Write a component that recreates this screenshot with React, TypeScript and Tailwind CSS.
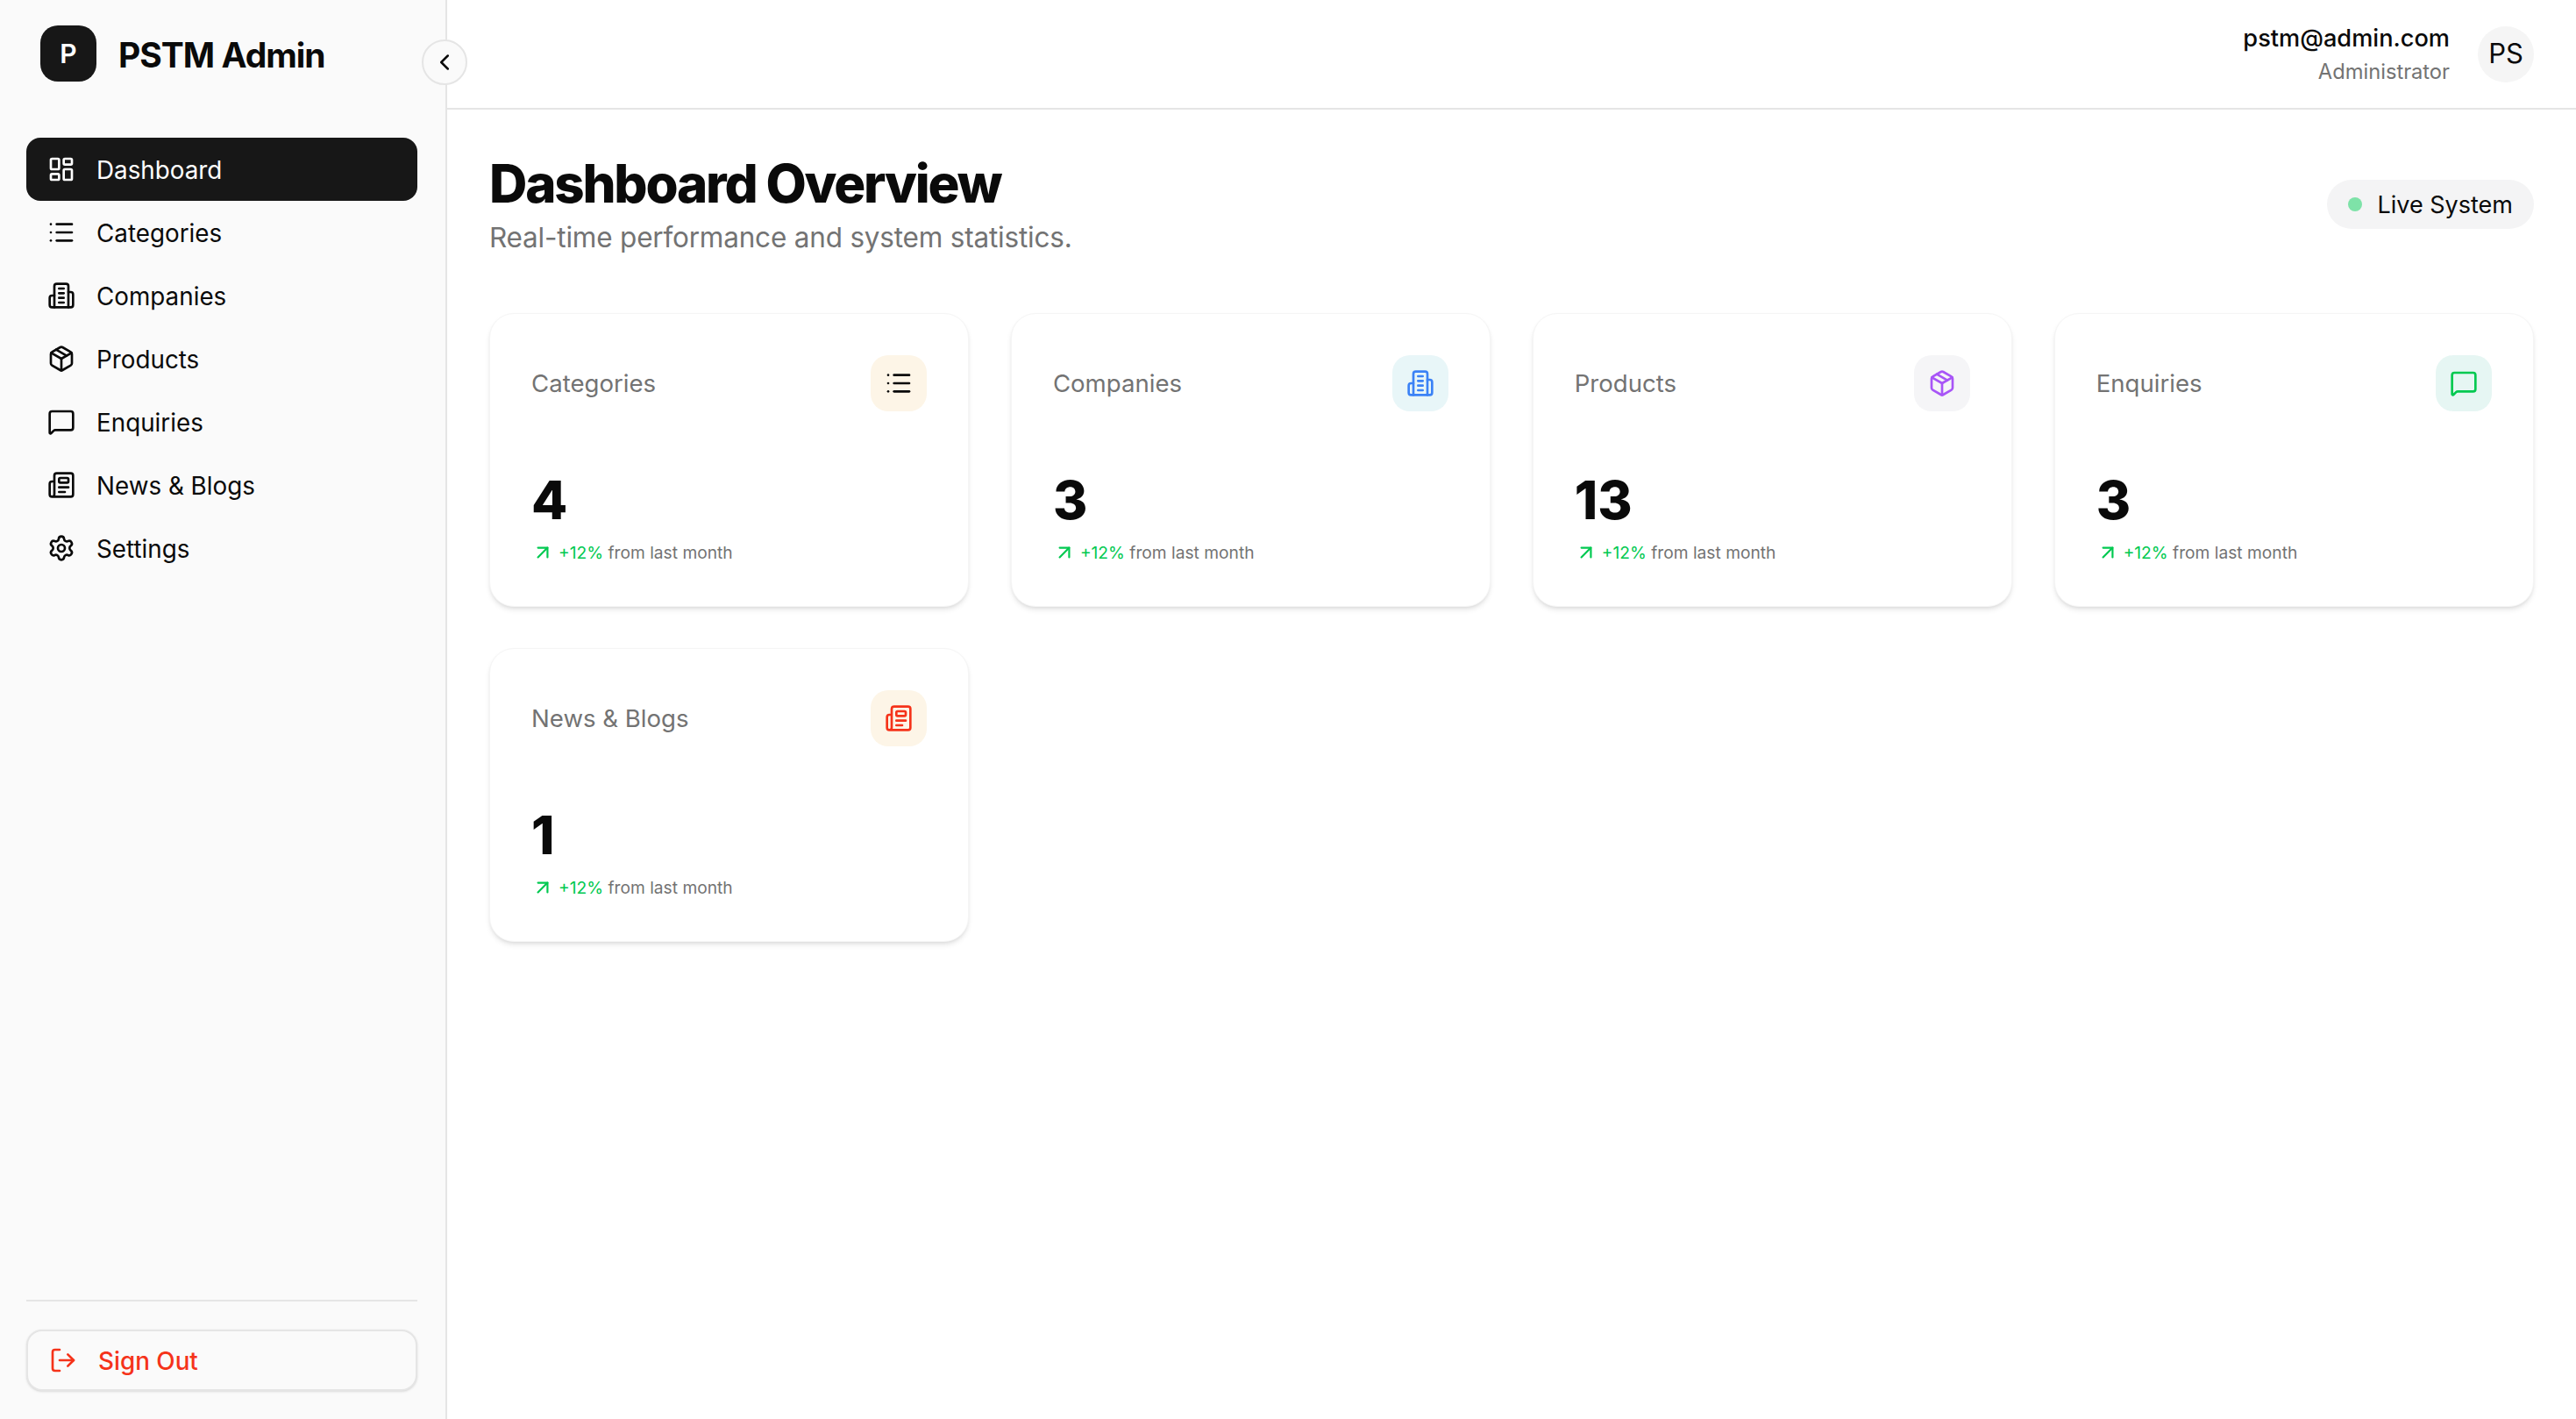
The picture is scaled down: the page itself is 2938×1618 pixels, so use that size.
import React from "react";
import { LayoutDashboard, List, Package, MessageSquare, Newspaper, Settings, LogOut, ChevronLeft, ArrowUpRight } from "lucide-react";

function Building({ size = 32, className = "" }: { size?: number; className?: string }) {
  return (
    <svg width={size} height={size} viewBox="0 0 24 24" fill="none" stroke="currentColor" strokeWidth="2" strokeLinecap="round" strokeLinejoin="round" className={className}>
      <path d="M6 22V4a2 2 0 0 1 2-2h8a2 2 0 0 1 2 2v18Z" />
      <path d="M6 12H4a2 2 0 0 0-2 2v6a2 2 0 0 0 2 2h2" />
      <path d="M18 9h2a2 2 0 0 1 2 2v9a2 2 0 0 1-2 2h-2" />
      <path d="M10 6h4" />
      <path d="M10 10h4" />
      <path d="M10 14h4" />
      <path d="M10 18h4" />
    </svg>
  );
}

const nav = [
  { label: "Dashboard", Icon: LayoutDashboard },
  { label: "Categories", Icon: List },
  { label: "Companies", Icon: Building },
  { label: "Products", Icon: Package },
  { label: "Enquiries", Icon: MessageSquare },
  { label: "News & Blogs", Icon: Newspaper },
  { label: "Settings", Icon: Settings },
];

const cards = [
  { label: "Categories", value: "4", Icon: List, tile: "bg-[#fdf5e7]", icon: "text-[#0a0a0a]" },
  { label: "Companies", value: "3", Icon: Building, tile: "bg-[#e8f6f8]", icon: "text-[#3b82f6]" },
  { label: "Products", value: "13", Icon: Package, tile: "bg-[#f5f5f7]", icon: "text-[#a855f7]" },
  { label: "Enquiries", value: "3", Icon: MessageSquare, tile: "bg-[#e6f6f3]", icon: "text-[#00c950]" },
  { label: "News & Blogs", value: "1", Icon: Newspaper, tile: "bg-[#fdf5e7]", icon: "text-[#f5331a]" },
];

export default function App() {
  return (
    <div className="flex h-screen w-full overflow-hidden bg-white font-['Inter',sans-serif] text-[#0a0a0a]">
      <aside className="relative flex w-[510px] shrink-0 flex-col border-r-2 border-[#e5e5e5] bg-[#fafafa]">
        <div className="flex items-center gap-[25px] pl-[46px] pt-[29px]">
          <div className="flex h-16 w-16 items-center justify-center rounded-[20px] bg-[#171717] text-[30px] font-semibold text-white">P</div>
          <span className="pt-[2px] text-[39px] font-bold leading-none tracking-[-1px] text-[#0a0a0a]">PSTM Admin</span>
        </div>
        <button className="absolute left-[481px] top-[45px] z-10 flex h-[52px] w-[52px] items-center justify-center rounded-full border-2 border-[#e5e5e5] bg-[#fafafa]">
          <ChevronLeft size={30} strokeWidth={2} />
        </button>
        <nav className="mt-16 flex flex-col pl-[30px] pr-[32px]">
          {nav.map(({ label, Icon }, i) => (
            <div
              key={label}
              className={`flex h-[72px] items-center gap-6 rounded-[16px] px-6 text-[27.8px] ${i === 0 ? "bg-[#171717] text-white" : "text-[#0a0a0a]"}`}
            >
              <Icon size={32} />
              <span className="pt-[3px]">{label}</span>
            </div>
          ))}
        </nav>
        <div className="mt-auto pb-[32px] pl-[30px] pr-[32px]">
          <div className="mb-[32px] h-[2px] bg-[#e5e5e5]" />
          <button className="flex h-[70px] w-full items-center gap-6 rounded-[18px] border-2 border-[#e5e5e5] bg-[#fafafa] px-6 text-[27.8px] font-medium text-[#f5331a] shadow-sm">
            <LogOut size={32} />
            <span className="pt-[3px]">Sign Out</span>
          </button>
        </div>
      </aside>

      <div className="flex min-w-0 flex-1 flex-col">
        <header className="flex h-[125px] items-center justify-end gap-[32px] border-b-2 border-[#e5e5e5] px-12">
          <div className="flex flex-col items-end">
            <span className="pt-[2px] text-[27.2px] font-medium leading-[36px]">pstm@admin.com</span>
            <span className="pt-[2px] text-[23.7px] leading-[36px] text-[#737373]">Administrator</span>
          </div>
          <div className="flex h-16 w-16 items-center justify-center rounded-full bg-[#f5f5f5] text-[31px]">PS</div>
        </header>
        <main className="flex-1 px-12 pt-[48px]">
          <div className="flex items-start justify-between">
            <div>
              <h1 className="text-[60px] font-extrabold leading-[72px] tracking-[-2.2px]">Dashboard Overview</h1>
              <p className="mt-[6px] text-[31.5px] leading-[40px] tracking-[-0.2px] text-[#737373]">Real-time performance and system statistics.</p>
            </div>
            <div className="mt-[32px] flex h-14 items-center gap-[18px] rounded-full bg-[#f4f4f5] px-6 text-[27px]">
              <span className="h-4 w-4 rounded-full bg-[#7ee2a8]" />
              <span className="pt-[2px]">Live System</span>
            </div>
          </div>
          <div className="mt-[66px] grid grid-cols-4 gap-x-[47.5px] gap-y-[47px]">
            {cards.map(({ label, value, Icon, tile, icon }) => (
              <div key={label} className="flex flex-col rounded-[28px] border border-[#f5f5f5] bg-white p-[47px] shadow-md">
                <div className="flex items-center justify-between">
                  <span className="pt-[2px] text-[27.6px] text-[#737373]">{label}</span>
                  <div className={`flex h-16 w-16 items-center justify-center rounded-[20px] ${tile}`}>
                    <Icon size={32} className={icon} />
                  </div>
                </div>
                <div className="mt-[65px] text-[60px] font-extrabold leading-[72px]">{value}</div>
                <div className="mt-[10px] flex h-[28px] items-center gap-[5px] text-[19.2px]">
                  <ArrowUpRight size={26} className="text-[#00c950]" />
                  <span>
                    <span className="text-[#00c950]">+12%</span> <span className="text-[#737373]">from last month</span>
                  </span>
                </div>
              </div>
            ))}
          </div>
        </main>
      </div>
    </div>
  );
}
